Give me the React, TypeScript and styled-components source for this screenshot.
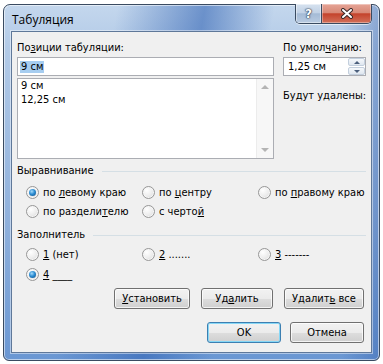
import React from 'react'
import styled, {createGlobalStyle} from 'styled-components'

const GlobalStyle = createGlobalStyle`
  html, body {
    margin: 0;
    padding: 0;
    background: #fff;
  }
  body {
    font-family: "DejaVu Sans Condensed", "DejaVu Sans", sans-serif;
    font-size: 11px;
    color: #000;
  }
`
const Screen = styled.div`
  width: 383px;
  height: 364px;
  box-sizing: border-box;
  padding: 4px 0 0 3px;
`
const Window = styled.div`
  width: 377px;
  height: 357px;
  box-sizing: border-box;
  display: flex;
  flex-direction: column;
  padding: 0 7px 7px 7px;
  border: 1px solid #3a4b61;
  border-radius: 7px 7px 6px 6px;
  background:
    linear-gradient(100deg, rgba(255, 255, 255, 0) 26%, rgba(50, 100, 180, .6) 46%, rgba(255, 255, 255, 0) 62%),
    linear-gradient(90deg, rgba(255, 255, 255, 0) 90%, rgba(40, 85, 165, .35) 100%),
    linear-gradient(180deg, #c4d7ed 0%, #b2cae7 12%, #90b1dc 60%, #6a97d3 100%);
  box-shadow: inset 0 0 0 1px rgba(255, 255, 255, .55);
`
const TitleBar = styled.div`
  height: 26px;
  display: flex;
  align-items: flex-start;
  flex-shrink: 0;
`
const Title = styled.div`
  padding: 7px 0 0 1px;
  line-height: 16px;
  font-family: "Open Sans", "Noto Sans", sans-serif;
  font-size: 12px;
  color: #000;
`
const Caption = styled.div`
  display: flex;
  margin-left: auto;
  margin-top: -1px;
  height: 19px;
  border: 1px solid #3a4b61;
  border-top: none;
  border-radius: 0 0 5px 5px;
  overflow: hidden;
  box-shadow: 0 1px 0 rgba(255, 255, 255, .6);
`
const HelpButton = styled.div`
  width: 25px;
  display: grid;
  place-items: center;
  border-right: 1px solid #3a4b61;
  background: linear-gradient(#d6e2ef 0%, #c2d2e6 45%, #a5bbd6 52%, #b9cbe1 100%);
  box-shadow: inset 0 0 0 1px rgba(255, 255, 255, .45);
  font-family: "DejaVu Sans", sans-serif;
  font-weight: bold;
  font-size: 12px;
  color: #fff;
  text-shadow: 0 0 1px #2b3a4f, 0 0 1px #2b3a4f, 0 0 2px #2b3a4f;
`
const CloseButton = styled.div`
  width: 49px;
  display: grid;
  place-items: center;
  background: linear-gradient(#e6a597 0%, #d88977 45%, #c4432c 52%, #d2705a 100%);
  box-shadow: inset 0 0 0 1px rgba(255, 255, 255, .35);
`
const Client = styled.div`
  flex: 1;
  display: flex;
  flex-direction: column;
  background: #f0f0f0;
  border: 1px solid #5f7899;
  padding: 9px 5px 0 5px;
  box-shadow: 0 0 0 1px rgba(255, 255, 255, .45);
`
const TopArea = styled.div`
  display: grid;
  grid-template-columns: 257px 83px;
  column-gap: 9px;
`
const Column = styled.div`
  display: flex;
  flex-direction: column;
`
const Label = styled.div<{$top?: number}>`
  line-height: 14px;
  margin-top: ${p => p.$top ?? 0}px;
  white-space: nowrap;
`
const U = styled.span`
  text-decoration: underline;
  text-underline-offset: 1px;
`
const TextBox = styled.div`
  margin-top: 2px;
  height: 19px;
  box-sizing: border-box;
  display: flex;
  align-items: center;
  background: #fff;
  border: 1px solid #abadb3;
  padding-left: 2px;
`
const Selected = styled.span`
  background: #a6cdf0;
  line-height: 12px;
  padding: 0 1px;
`
const SpinValue = styled.span`
  padding-left: 2px;
`
const ListBox = styled.div`
  margin-top: 2px;
  height: 81px;
  box-sizing: border-box;
  display: flex;
  background: #fff;
  border: 1px solid #abadb3;
`
const ListItems = styled.div`
  flex: 1;
  padding-left: 3px;
  line-height: 14px;
`
const ScrollBar = styled.div`
  width: 16px;
  display: flex;
  flex-direction: column;
  justify-content: space-between;
  background: #f7f7f7;
  border-left: 1px solid #ececec;
`
const ScrollArrow = styled.div<{$down?: boolean}>`
  height: 16px;
  display: grid;
  place-items: center;

  &::before {
    content: "";
    border-left: 4px solid transparent;
    border-right: 4px solid transparent;
    ${p => p.$down ? 'border-top: 4px solid #b4b4b4;' : 'border-bottom: 4px solid #b4b4b4;'}
  }
`
const Spin = styled.div`
  width: 17px;
  margin-left: auto;
  align-self: stretch;
  display: flex;
  flex-direction: column;
  gap: 1px;
`
const SpinButton = styled.div<{$down?: boolean}>`
  flex: 1;
  display: grid;
  place-items: center;
  background: linear-gradient(#f5f8fb, #dfe7f0);
  border: 1px solid #c3cfdd;
  border-radius: 2px;

  &::before {
    content: "";
    border-left: 3px solid transparent;
    border-right: 3px solid transparent;
    ${p => p.$down ? 'border-top: 3px solid #4b5f7c;' : 'border-bottom: 3px solid #4b5f7c;'}
  }
`
const GroupHeader = styled.div<{$top: number}>`
  display: flex;
  align-items: center;
  line-height: 14px;
  margin-top: ${p => p.$top}px;

  &::after {
    content: "";
    flex: 1;
    height: 1px;
    margin-left: 8px;
    background: #d5dfe5;
  }
`
const RadioGrid = styled.div<{$top: number; $row: number}>`
  display: grid;
  grid-template-columns: 116px 116px 116px;
  grid-auto-rows: ${p => p.$row}px;
  margin: ${p => p.$top}px 0 0 9px;
`
const RadioItem = styled.div`
  display: flex;
  align-items: center;
  gap: 4px;
  white-space: nowrap;
`
const RadioDot = styled.span<{$checked?: boolean}>`
  width: 13px;
  height: 13px;
  box-sizing: border-box;
  flex-shrink: 0;
  display: grid;
  place-items: center;
  border-radius: 50%;
  border: 1px solid #979797;
  background: radial-gradient(circle at 35% 30%, #ffffff 0%, #ececec 55%, #cfcfcf 100%);
  box-shadow: inset 0 0 0 1px #f6f6f6;

  &::after {
    content: "";
    display: ${p => p.$checked ? 'block' : 'none'};
    width: 7px;
    height: 7px;
    border-radius: 50%;
    background: radial-gradient(circle at 40% 35%, #a6dbfa 0%, #2c8dd3 45%, #0b4a82 100%);
  }
`
const ButtonRow = styled.div<{$top: number; $gap: number}>`
  display: flex;
  justify-content: flex-end;
  gap: ${p => p.$gap}px;
  margin-top: ${p => p.$top}px;
  padding-right: 2px;
`
const Button = styled.button<{$w: number; $default?: boolean}>`
  width: ${p => p.$w}px;
  height: 21px;
  box-sizing: border-box;
  padding: 0;
  font: inherit;
  color: #000;
  border: 1px solid ${p => p.$default ? '#3c7fb1' : '#707070'};
  border-radius: 3px;
  background: linear-gradient(#f2f2f2 0%, #ebebeb 50%, #dddddd 51%, #cfcfcf 100%);
  box-shadow: inset 0 0 0 1px ${p => p.$default ? '#86d7f6' : 'rgba(255, 255, 255, .75)'};
`

type Radio = {label: React.ReactNode; checked?: boolean}

const alignment: Radio[] = [
    {label: <>по <U>л</U>евому краю</>, checked: true},
    {label: <>по <U>ц</U>ентру</>},
    {label: <>по <U>п</U>равому краю</>},
    {label: <>по раздели<U>т</U>елю</>},
    {label: <>с черто<U>й</U></>},
]
const leader: Radio[] = [
    {label: <><U>1</U> (нет)</>},
    {label: <><U>2</U> .......</>},
    {label: <><U>3</U> -------</>},
    {label: <><U>4</U> ____</>, checked: true},
]

const Radios: React.FC<{items: Radio[]; top: number; row: number}> = ({items, top, row}) => (
    <RadioGrid $top={top} $row={row}>
        {items.map((r, i) => <RadioItem key={i}>
            <RadioDot $checked={r.checked} />
            <span>{r.label}</span>
        </RadioItem>)}
    </RadioGrid>
)

export default function App() {
    return (
        <Screen>
            <GlobalStyle />
            <Window>
                <TitleBar>
                    <Title>Табуляция</Title>
                    <Caption>
                        <HelpButton>?</HelpButton>
                        <CloseButton>
                            <svg width="14" height="11" viewBox="0 0 14 11">
                                <path d="M3 2 L11 9 M11 2 L3 9" stroke="#3a2a2a" strokeWidth="4" strokeLinecap="round" />
                                <path d="M3 2 L11 9 M11 2 L3 9" stroke="#fff" strokeWidth="2" strokeLinecap="round" />
                            </svg>
                        </CloseButton>
                    </Caption>
                </TitleBar>
                <Client>
                    <TopArea>
                        <Column>
                            <Label>По<U>з</U>иции табуляции:</Label>
                            <TextBox><Selected>9 см</Selected></TextBox>
                            <ListBox>
                                <ListItems>
                                    <div>9 см</div>
                                    <div>12,25 см</div>
                                </ListItems>
                                <ScrollBar>
                                    <ScrollArrow />
                                    <ScrollArrow $down />
                                </ScrollBar>
                            </ListBox>
                        </Column>
                        <Column>
                            <Label>По умол<U>ч</U>анию:</Label>
                            <TextBox>
                                <SpinValue>1,25 см</SpinValue>
                                <Spin>
                                    <SpinButton />
                                    <SpinButton $down />
                                </Spin>
                            </TextBox>
                            <Label $top={13}>Будут удалены:</Label>
                        </Column>
                    </TopArea>
                    <GroupHeader $top={5}>Выравнивание</GroupHeader>
                    <Radios items={alignment} top={5} row={19} />
                    <GroupHeader $top={7}>Заполнитель</GroupHeader>
                    <Radios items={leader} top={2} row={20} />
                    <ButtonRow $top={4} $gap={11}>
                        <Button $w={76}><U>У</U>становить</Button>
                        <Button $w={72}>Уд<U>а</U>лить</Button>
                        <Button $w={80}>Удалит<U>ь</U> все</Button>
                    </ButtonRow>
                    <ButtonRow $top={13} $gap={9}>
                        <Button $w={74} $default>OK</Button>
                        <Button $w={74}>Отмена</Button>
                    </ButtonRow>
                </Client>
            </Window>
        </Screen>
    )
}
